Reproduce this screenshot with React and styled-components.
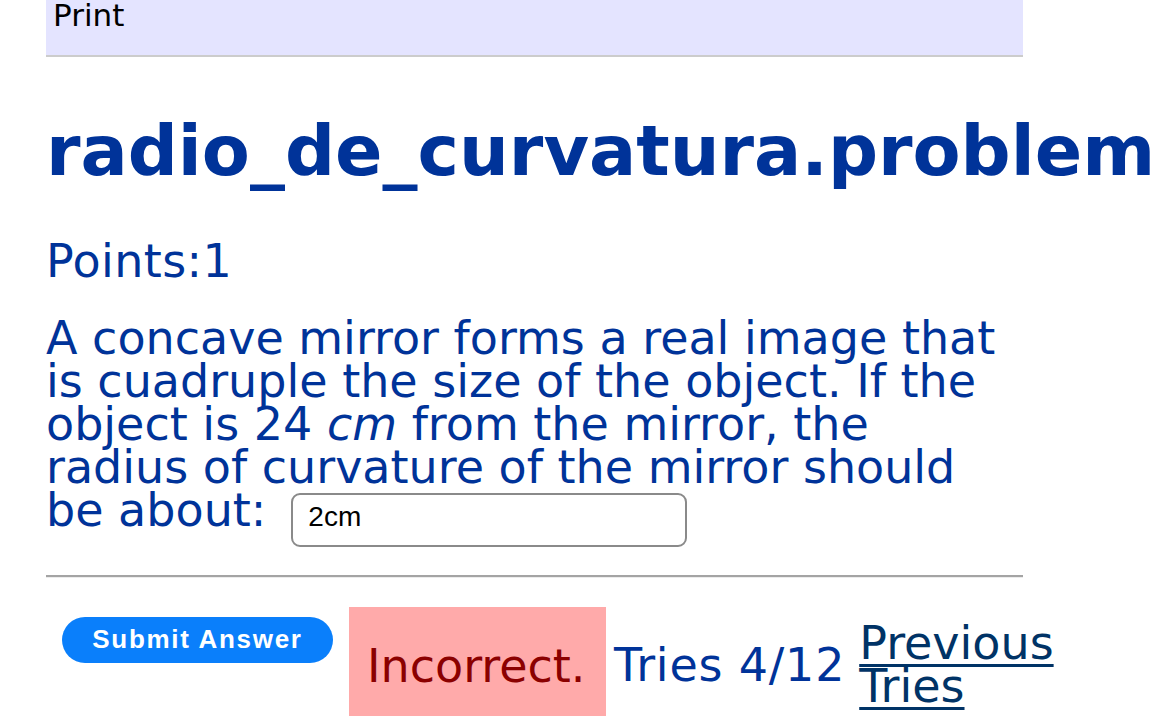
import React from "react";
import styled, { createGlobalStyle } from "styled-components";

const Global = createGlobalStyle`
  html, body { margin: 0; padding: 0; background: #ffffff; }
  body { font-family: "DejaVu Sans", Verdana, sans-serif; }
`;

const Page = styled.div`
  width: 977px;
  padding-left: 46px;
  display: flex;
  flex-direction: column;
`;

const Header = styled.div`
  height: 55px;
  background: #e4e4ff;
  border-bottom: 2px solid #cccccc;
  padding-left: 7px;
  font-size: 31px;
  line-height: 30px;
  color: #000;
`;

const Title = styled.h1`
  margin: 53px 0 0 0;
  font-size: 70px;
  font-weight: bold;
  line-height: 82px;
  color: #003399;
  white-space: nowrap;
`;

const Points = styled.div`
  margin-top: 48px;
  font-size: 46px;
  line-height: 43px;
  letter-spacing: 0.4px;
  color: #003399;
`;

const Question = styled.div`
  margin-top: 34px;
  font-size: 46px;
  line-height: 43px;
  color: #003399;
`;

const Answer = styled.input`
  box-sizing: border-box;
  width: 396px;
  height: 54px;
  margin-left: 25px;
  padding: 0 15px 5px;
  border: 2px solid #8a8a8a;
  border-radius: 9px;
  font-family: "Liberation Sans", Arial, sans-serif;
  font-size: 28px;
  color: #000;
  background: #fff;
  vertical-align: baseline;
  outline: none;
`;

const Rule = styled.hr`
  margin: 28px 0 0 0;
  height: 0;
  border: none;
  border-top: 2px solid #a4a4a4;
  border-bottom: 1px solid #ececec;
`;

const Results = styled.div`
  margin-top: 29px;
  display: flex;
  align-items: flex-start;
  white-space: nowrap;
`;

const SubmitButton = styled.button`
  flex-shrink: 0;
  margin: 10px 0 0 16px;
  width: 271px;
  height: 46px;
  border: none;
  border-radius: 23px;
  background: #0a7ffb;
  color: #ffffff;
  font-family: "Liberation Sans", Arial, sans-serif;
  font-weight: bold;
  font-size: 26px;
  letter-spacing: 1.7px;
  padding: 0;
  cursor: pointer;
`;

const Verdict = styled.div`
  flex-shrink: 0;
  margin-left: 16px;
  box-sizing: border-box;
  height: 109px;
  width: 257px;
  padding: 32px 0 0 18px;
  background: #ffaaaa;
  color: #8b0000;
  font-size: 46px;
  line-height: 54px;
`;

const Tries = styled.div`
  flex-shrink: 0;
  margin: 37px 0 0 8px;
  font-size: 46px;
  line-height: 43px;
  letter-spacing: 0.8px;
  color: #003399;
`;

const PrevLink = styled.a`
  flex-shrink: 0;
  display: block;
  margin: 15px 0 0 14px;
  width: 196px;
  white-space: normal;
  font-size: 46px;
  line-height: 43px;
  color: #003366;
  text-decoration: underline;
  text-decoration-thickness: 3px;
  text-underline-offset: 5px;
`;

export default function App() {
  return (
    <>
      <Global />
      <Page>
        <Header>Print</Header>
        <Title>radio_de_curvatura.problem</Title>
        <Points>Points:1</Points>
        <Question>
          A concave mirror forms a real image that is cuadruple the size of the
          object. If the object is 24 <i>cm</i> from the mirror, the radius of
          curvature of the mirror should be about:
          <Answer defaultValue="2cm" />
        </Question>
        <Rule />
        <Results>
          <SubmitButton>Submit Answer</SubmitButton>
          <Verdict>Incorrect.</Verdict>
          <Tries>Tries 4/12</Tries>
          <PrevLink href="#">Previous Tries</PrevLink>
        </Results>
      </Page>
    </>
  );
}
